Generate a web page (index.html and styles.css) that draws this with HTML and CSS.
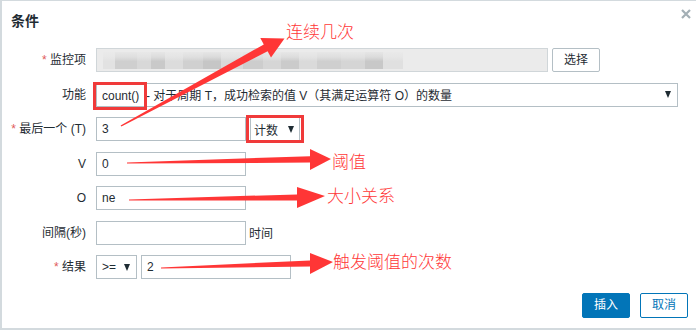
FILE: index.html
```html
<!DOCTYPE html>
<html lang="zh">
<head>
<meta charset="utf-8">
<title>条件</title>
<link rel="stylesheet" href="styles.css">
</head>
<body>
<div class="dialog">
  <div class="header">
    <div class="title">条件</div>
    <svg class="close" width="10" height="10" viewBox="0 0 10 10"><path d="M1 1 L9 9 M9 1 L1 9" stroke="#a3afb5" stroke-width="2.2"/></svg>
  </div>
  <div class="form">
    <div class="label"><span class="req">*</span> 监控项</div>
    <div class="ctrl">
      <div class="input readonly wide"><div class="blur"></div></div>
      <div class="btn-plain">选择</div>
    </div>

    <div class="label">功能</div>
    <div class="ctrl">
      <div class="select func"><span>count()&nbsp; - 对于周期 T，成功检索的值 V（其满足运算符 O）的数量</span><i class="tri"></i></div>
    </div>

    <div class="label"><span class="req">*</span> 最后一个 (T)</div>
    <div class="ctrl">
      <div class="input">3</div>
      <div class="select small"><span>计数</span><i class="tri"></i></div>
    </div>

    <div class="label">V</div>
    <div class="ctrl"><div class="input">0</div></div>

    <div class="label">O</div>
    <div class="ctrl"><div class="input">ne</div></div>

    <div class="label">间隔(秒)</div>
    <div class="ctrl"><div class="input"></div><span class="suffix">时间</span></div>

    <div class="label"><span class="req">*</span> 结果</div>
    <div class="ctrl">
      <div class="select op"><span>&gt;=</span><i class="tri"></i></div>
      <div class="input">2</div>
    </div>
  </div>
  <div class="footer">
    <div class="btn-primary">插入</div>
    <div class="btn-outline">取消</div>
  </div>

  <div class="overlay">
    <svg width="696" height="330" viewBox="0 0 696 330">
      <g fill="#ff3636">
        <polygon points="120.6,125.4 263.8,44.4 260.3,38.0 284.5,38.5 271.0,57.6 267.6,51.2 121.4,126.6"/>
        <polygon points="127,162.4 310,156.2 310,149 331,159 310,170 310,162.6 127,163.6"/>
        <polygon points="129,199.4 297,194.4 297,187 325,196 297,208 297,200.4 129,200.6"/>
        <polygon points="161,267.4 310,260.4 310,253 333,262 310,274 310,266.4 161,268.6"/>
      </g>
      <g fill="none" stroke="#f03a3a" stroke-width="3">
        <rect x="94.5" y="83.5" width="51" height="25"/>
        <rect x="247.5" y="116.5" width="55" height="25"/>
      </g>
    </svg>
    <span class="note n1">连续几次</span>
    <span class="note n2">阈值</span>
    <span class="note n3">大小关系</span>
    <span class="note n4">触发阈值的次数</span>
  </div>
</div>
</body>
</html>
```
FILE: styles.css
```css
* { box-sizing: border-box; }
html, body { margin: 0; padding: 0; background: #fff; }
body {
  width: 696px;
  height: 330px;
  overflow: hidden;
  font-family: "Liberation Sans", "Noto Sans CJK SC", sans-serif;
  font-size: 12px;
  color: #1f2c33;
}
.dialog {
  position: relative;
  width: 696px;
  height: 330px;
  background: #fff;
  border-top: 1px solid #d3dade;
  border-left: 2px solid #d3dade;
  border-bottom: 2px solid #d3dade;
}
.header {
  height: 47px;
  display: flex;
  justify-content: space-between;
  align-items: flex-start;
  padding: 11px 5px 0 9px;
}
.title {
  font-size: 14px;
  font-weight: bold;
  line-height: 18px;
}
.close { margin-top: -3px; }
.form {
  display: grid;
  grid-template-columns: 84px 1fr;
  column-gap: 10px;
  row-gap: 10.5px;
  grid-auto-rows: 24px;
}
.label {
  text-align: right;
  line-height: 24px;
  white-space: nowrap;
}
.req { color: #e05a5a; }
.ctrl {
  display: flex;
  align-items: center;
  gap: 4px;
}
.input {
  width: 150px;
  height: 24px;
  border: 1px solid #b4bfc5;
  background: #fff;
  line-height: 22px;
  padding: 0 5px;
}
.input.readonly {
  background: #ebebeb;
  border-color: #d0d6d9;
}
.input.wide {
  width: 452px;
  padding: 3px 0 2px 6px;
}
.blur {
  width: 300px;
  height: 17px;
  background:
    linear-gradient(to bottom, rgba(235,235,235,0.85) 0, rgba(235,235,235,0.55) 30%, rgba(235,235,235,0) 55%),
    linear-gradient(to right, #e2e2e2 0 12px, #cfcfcf 12px 34px, #d8d8d8 34px 48px, #c9c9c9 48px 62px, #dcdcdc 62px 80px, #d0d0d0 80px 100px, #c6c6c6 100px 118px, #d9d9d9 118px 140px, #cdcdcd 140px 160px, #d6d6d6 160px 178px, #cbcbcb 178px 196px, #dadada 196px 214px, #cfcfcf 214px 238px, #d5d5d5 238px 262px, #c8c8c8 262px 280px, #e0e0e0 280px 300px);
}
.btn-plain {
  width: 48px;
  height: 24px;
  border: 1px solid #b4bfc5;
  border-radius: 2px;
  background: #fff;
  text-align: center;
  line-height: 22px;
}
.select {
  height: 24px;
  border: 1px solid #b4bfc5;
  background: #fff;
  display: flex;
  align-items: center;
  justify-content: space-between;
  padding: 0 6px 0 5px;
  white-space: nowrap;
}
.select.func { width: 582px; }
.select.small { width: 50px; padding: 0 5px 0 3px; }
.select.op { width: 41px; padding: 0 6px 0 5px; }
.tri {
  display: block;
  width: 0;
  height: 0;
  border-left: 3.5px solid transparent;
  border-right: 3.5px solid transparent;
  border-top: 7px solid #1f2c33;
}
.suffix { margin-left: -1px; }
.footer {
  display: flex;
  justify-content: flex-end;
  gap: 10px;
  padding-right: 8px;
  margin-top: 14px;
}
.btn-primary, .btn-outline {
  width: 48px;
  height: 25px;
  border-radius: 2px;
  text-align: center;
  line-height: 23px;
  font-size: 12px;
}
.btn-primary {
  background: #0275b8;
  border: 1px solid #0275b8;
  color: #fff;
}
.btn-outline {
  background: #fff;
  border: 1px solid #0275b8;
  color: #0275b8;
}
.overlay {
  position: absolute;
  left: -2px;
  top: -1px;
  width: 696px;
  height: 330px;
  pointer-events: none;
}
.overlay svg { position: absolute; left: 0; top: 0; }
.note {
  position: absolute;
  color: #ff3838;
  font-family: "Noto Sans CJK SC", sans-serif;
  font-weight: 300;
  font-size: 17px;
  line-height: 17px;
  white-space: nowrap;
}
.n1 { left: 286px; top: 22px; }
.n2 { left: 332px; top: 152px; }
.n3 { left: 327px; top: 186px; }
.n4 { left: 333px; top: 252px; }
```
